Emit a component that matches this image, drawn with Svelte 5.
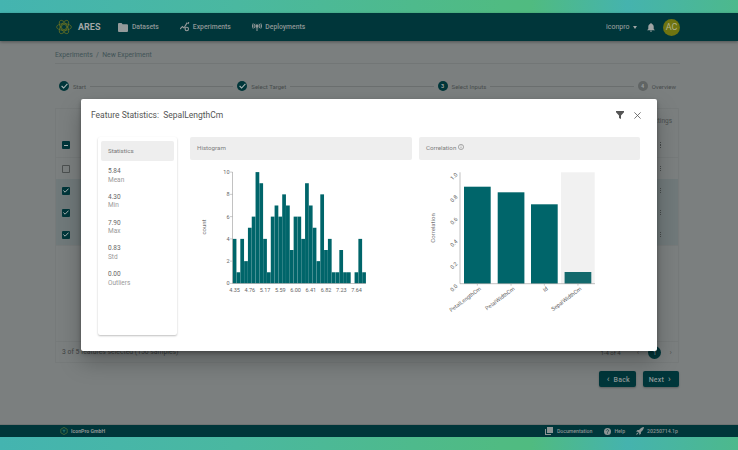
<script>
  const hist = [4,1,4,2,5,6,10,9,4,1,6,7,6,8,7,3,6,6,4,9,7,5,2,8,3,4,1,1,3,1,1,0,1,4,1];
  const hx0 = 232.7, hy0 = 283.4, hw = 133.3 / 35, hu = 11.13;
  const hTicks = [0,2,4,6,8,10];
  const hLabels = ['4.35','4.76','5.17','5.59','6.00','6.41','6.82','7.23','7.64'];
  const corr = [
    { name: 'PetalLengthCm', x: 464, w: 26.7, top: 186.7 },
    { name: 'PetalWidthCm', x: 497.7, w: 26.7, top: 192.3 },
    { name: 'Id', x: 531, w: 26.7, top: 204.3 },
    { name: 'SepalWidthCm', x: 564.6, w: 26.7, top: 272, dim: true }
  ];
  const cTicks = ['0.0','0.2','0.4','0.6','0.8','1.0'];
  const stats = [
    ['5.84','Mean'],['4.30','Min'],['7.90','Max'],['0.83','Std'],['0.00','Outliers']
  ];
  const rows = [0,1,2,3,4];
  const steps = [
    { label: 'Start', done: true },
    { label: 'Select Target', done: true },
    { label: 'Select Inputs', n: 3, active: true },
    { label: 'Overview', n: 4 }
  ];
</script>

<div class="page">
  <div class="shell">
    <header class="top">
      <svg class="logo" viewBox="0 0 16 16" fill="none" stroke="#6d7420" stroke-width=".7">
        <ellipse cx="8" cy="8" rx="7.4" ry="3.4"/>
        <ellipse cx="8" cy="8" rx="7.4" ry="3.4" transform="rotate(60 8 8)"/>
        <ellipse cx="8" cy="8" rx="7.4" ry="3.4" transform="rotate(120 8 8)"/>
        <circle cx="8" cy="8" r="2.6"/>
      </svg>
      <span class="brand">ARES</span>
      <nav class="nav">
        <span class="nav-item">
          <svg width="10" height="9" viewBox="0 0 10 9" fill="#949a9a"><path d="M0 1a1 1 0 0 1 1-1h2.6l1 1.2H9a1 1 0 0 1 1 1V8a1 1 0 0 1-1 1H1a1 1 0 0 1-1-1z"/></svg>
          Datasets
        </span>
        <span class="nav-item exp">
          <svg width="10" height="10" viewBox="0 0 10 10" fill="none" stroke="#949a9a" stroke-width="1.1"><path d="M0 7l2.4-2.4L4 6l3.2-5.4M8.8 0L8 2"/><circle cx="6.8" cy="7" r="1.7"/></svg>
          Experiments
        </span>
        <span class="nav-item">
          <svg width="10" height="8" viewBox="0 0 10 8" fill="none" stroke="#949a9a" stroke-width="1"><circle cx="5" cy="3" r="1.2" fill="#949a9a"/><path d="M5 3v5M3 .8a3.2 3.2 0 0 0 0 4.400M7 .8a3.2 3.2 0 0 1 0 4.400M1.200.4a5 5 0 0 0 0 5.200M8.800.4a5 5 0 0 1 0 5.200"/></svg>
          Deployments
        </span>
      </nav>
      <span class="spacer"></span>
      <span class="user">iconpro</span>
      <span class="caret"></span>
      <svg class="bell" width="8" height="9" viewBox="0 0 8 9" fill="#a0a5a5"><path d="M4 0a.7.7 0 0 1 .7.7v.4C6 1.4 6.7 2.5 6.7 3.800V6L8 7.200H0L1.300 6V3.800C1.300 2.500 2 1.400 3.300 1.100V.7A.7.7 0 0 1 4 0zM3 7.800h2A1 1 0 0 1 3 7.800z"/></svg>
      <span class="avatar">AC</span>
    </header>

    <main class="main">
      <div class="crumbs">Experiments&nbsp; /&nbsp; New Experiment</div>
      <div class="stepper">
        {#each steps as s, i}
          {#if i > 0}<span class="step-line"></span>{/if}
          <span class="step">
            <span class="dot" class:on={s.done || s.active}>
              {#if s.done}
                <svg width="7" height="6" viewBox="0 0 7 6" fill="none" stroke="#a8b4b4" stroke-width="1.1"><path d="M.6 3l2 2L6.4.8"/></svg>
              {:else}
                {s.n}
              {/if}
            </span>
            {s.label}
          </span>
        {/each}
      </div>

      <section class="table">
        <div class="table-head"><span class="settings">Settings</span></div>
        {#each rows as r}
          <div class="row" class:sel={r > 1} class:first={r === 0}>
            <span class="box" class:empty={r === 1}>
              {#if r === 0}<i class="dash"></i>{:else if r > 1}
                <svg width="6" height="5" viewBox="0 0 6 5" fill="none" stroke="#a8b4b4" stroke-width="1"><path d="M.4 2.5l1.7 1.700L5.600.6"/></svg>
              {/if}
            </span>
            <span class="kebab"><i></i><i></i><i></i></span>
          </div>
        {/each}
        <div class="row-end"></div>
        <span class="spacer"></span>
        <div class="table-foot">
          <span>3 of 5 features selected (150 samples)</span>
          <span class="spacer"></span>
          <span class="range">1-4 of 4</span>
          <span class="pg-chev">‹</span>
          <span class="pg-cur">1</span>
          <span class="pg-chev last">›</span>
        </div>
      </section>

      <div class="actions">
        <button class="btn"><span class="chev">‹</span> Back</button>
        <button class="btn">Next <span class="chev">›</span></button>
      </div>

      <div class="modal">
        <div class="modal-head">
          <span class="title">Feature Statistics:&nbsp; SepalLengthCm</span>
          <span class="spacer"></span>
          <svg width="8" height="8" viewBox="0 0 8 8" fill="#555"><path d="M0 0h8v1.200L5 4.400V8L3 7V4.400L0 1.200z"/></svg>
          <svg class="close" width="7" height="7" viewBox="0 0 7 7" fill="none" stroke="#555" stroke-width=".8"><path d="M.4.4l6.200 6.200M6.600.4L.4 6.600"/></svg>
        </div>
        <div class="modal-body">
          <aside class="stats">
            <div class="chip">Statistics</div>
            {#each stats as [v, l]}
              <div class="stat"><b>{v}</b><span>{l}</span></div>
            {/each}
          </aside>

          <div class="panel hist">
            <div class="panel-head">Histogram</div>
            <svg class="chart" viewBox="190 160 222 170" width="222" height="170">
              <text class="axis-title" transform="translate(206 227) rotate(-90)" text-anchor="middle">count</text>
              {#each hist as v, i}
                <rect x={hx0 + i * hw} y={hy0 - v * hu} width={hw - 0.08} height={v * hu} fill="#00656a"/>
              {/each}
              <path d="M232.5 172V283.5H366" fill="none" stroke="#999" stroke-width=".6"/>
              {#each hTicks as t}
                <path d="M230 {hy0 - t * hu}H232.5" stroke="#999" stroke-width=".5"/>
                <text class="tick" x="229.5" y={hy0 - t * hu + 2} text-anchor="end">{t}</text>
              {/each}
              {#each hLabels as l, i}
                <text class="tick" x={234.6 + i * 15.24} y="291.5" text-anchor="middle">{l}</text>
              {/each}
            </svg>
          </div>

          <div class="panel corr">
            <div class="panel-head">Correlation
              <svg width="6" height="6" viewBox="0 0 6 6" fill="none" stroke="#666" stroke-width=".5"><circle cx="3" cy="3" r="2.6"/><path d="M3 2.600v1.800M3 1.400v.6"/></svg>
            </div>
            <svg class="chart" viewBox="419 160 221 170" width="221" height="170">
              <text class="axis-title" transform="translate(435 228) rotate(-90)" text-anchor="middle">Correlation</text>
              <rect x="561" y="172.3" width="33.7" height="111.5" fill="#f1f1f1"/>
              {#each corr as b}
                <rect x={b.x} y={b.top} width={b.w} height={283.7 - b.top} fill={b.dim ? '#13696c' : '#00656a'}/>
              {/each}
              <path d="M460 172.3V283.7H595" fill="none" stroke="#999" stroke-width=".6"/>
              {#each cTicks as t, i}
                <text class="tick" transform="translate(458 {286.5 - i * 22.3}) rotate(-45)" text-anchor="end">{t}</text>
              {/each}
              {#each corr as b}
                <path d="M{b.x + b.w / 2} 283.7v2" stroke="#999" stroke-width=".5"/>
                <text class="tick" transform="translate({b.x + b.w / 2 + 4} 289.5) rotate(-37)" text-anchor="end">{b.name}</text>
              {/each}
            </svg>
          </div>
        </div>
      </div>
    </main>

    <footer class="foot">
      <svg class="flogo" viewBox="0 0 10 10" fill="none" stroke="#5d7a3a" stroke-width=".8"><path d="M5 .5L9 2.8V7.2L5 9.5 1 7.200V2.800z"/><path d="M5 3v4M3.200 4l1.800 1 1.800-1" stroke="#2f8a7e"/></svg>
      <span class="company">IconPro GmbH</span>
      <span class="spacer"></span>
      <span class="f-item">
        <svg width="8" height="8" viewBox="0 0 8 8" fill="#8d9494"><path d="M2 0h6v6H2zM0 2h1v5h5v1H0z"/></svg>
        Documentation
      </span>
      <span class="f-item help">
        <svg width="7" height="7" viewBox="0 0 7 7"><circle cx="3.5" cy="3.5" r="3.5" fill="#8d9494"/><path d="M2.400 2.700a1.100 1.100 0 1 1 1.700.9c-.5.3-.6.5-.6.9M3.500 5.100v.6" fill="none" stroke="#00353a" stroke-width=".7"/></svg>
        Help
      </span>
      <span class="f-item rocket">
        <svg width="8" height="8" viewBox="0 0 8 8" fill="#8d9494"><path d="M8 0C5.800.2 4.200 1.300 3 3.100L1.500 3 0 4.500l1.800.3L3.200 6.200l.3 1.800L5 6.500 4.900 5C6.700 3.800 7.800 2.200 8 0zM1.200 5.600L0 8l2.400-1.200z"/></svg>
        20250714.1p
      </span>
    </footer>
  </div>
</div>

<style>
  :global(body) {
    margin: 0;
    font-family: Roboto, "Liberation Sans", sans-serif;
  }
  .page {
    height: 450px;
    box-sizing: border-box;
    padding: 13px 0;
    background: linear-gradient(90deg, #44b4b0 0%, #4ab8a0 32%, #50bb82 68%, #50bb80 72%, #45b3ae 85%, #4db98c 100%);
  }
  .shell {
    height: 424px;
    display: flex;
    flex-direction: column;
    background: #7b7f7f;
  }
  .spacer { flex: 1; }

  .top {
    height: 28px;
    flex: none;
    display: flex;
    align-items: center;
    padding: 0 58px 0 56px;
    background: #00363a;
    box-shadow: 0 1px 3px rgba(0,0,0,.35);
    position: relative;
    z-index: 1;
  }
  .logo { width: 16px; height: 16px; }
  .brand { margin-left: 6px; font-size: 9px; font-weight: 700; color: #a2a6a6; }
  .nav { display: flex; margin-left: 18px; gap: 21px; }
  .nav-item { display: flex; align-items: center; gap: 3.5px; font-size: 6.8px; font-weight: 500; color: #8f9696; }
  .nav-item.exp { gap: 3px; }
  .user { font-size: 7px; color: #a0a5a5; }
  .caret { margin-left: 3px; border: 2.5px solid transparent; border-top: 3px solid #a0a5a5; border-bottom: 0; }
  .bell { margin-left: 10px; }
  .avatar {
    margin-left: 8.5px;
    width: 17px; height: 17px;
    border-radius: 50%;
    background: #6f7410;
    color: #aeb08c;
    font-size: 9px;
    display: flex; align-items: center; justify-content: center;
  }

  .main {
    flex: 1;
    position: relative;
    display: flex;
    flex-direction: column;
    padding: 0 58px 0 55px;
    min-height: 0;
  }
  .crumbs {
    height: 23px;
    flex: none;
    box-sizing: border-box;
    padding-top: 10px;
    line-height: 9px;
    font-size: 6.8px;
    color: #3f5356;
    border-bottom: 1px solid #727676;
  }
  .stepper {
    display: flex;
    align-items: center;
    height: 12px;
    margin-top: 16px;
    padding: 0 4px;
  }
  .step { display: flex; align-items: center; gap: 4px; font-size: 6px; color: #474c4c; }
  .step-line { flex: 1; height: 1px; background: #6a6e6e; margin: 0 4px; }
  .dot {
    width: 10px; height: 10px;
    border-radius: 50%;
    background: #606464;
    color: #9a9e9e;
    font-size: 5.5px;
    font-weight: 700;
    display: flex; align-items: center; justify-content: center;
  }
  .dot.on { background: #00363a; }

  .table {
    margin-top: 16px;
    height: 255px;
    flex: none;
    margin-right: 1px;
    display: flex;
    flex-direction: column;
    border: 1px solid #767a7a;
    box-sizing: border-box;
  }
  .table-head {
    height: 24px;
    flex: none;
    display: flex;
    justify-content: flex-end;
    padding: 8px 6px 0 0;
    box-sizing: border-box;
  }
  .settings { font-size: 6.5px; color: #4a4e4e; }
  .row {
    height: 22px;
    flex: none;
    display: flex;
    align-items: center;
    justify-content: space-between;
    padding: 0 17px 0 6px;
    border-top: 1px solid #767a7a;
    box-sizing: border-box;
  }
  .row.first { height: 24px; border-top: 0; }
  .row.sel { background: #70797a; border-top-color: #70797a; }
  .row-end { height: 0; border-top: 1px solid #767a7a; }
  .box {
    width: 8px; height: 8px;
    background: #00363a;
    border-radius: 1px;
    display: flex; align-items: center; justify-content: center;
  }
  .box.empty { background: none; box-shadow: inset 0 0 0 1px #4c5050; }
  .dash { width: 4px; height: 1px; background: #a8b4b4; display: block; }
  .kebab { display: flex; flex-direction: column; gap: 1px; }
  .kebab i { width: 1.3px; height: 1.3px; background: #474c4c; display: block; }
  .table-foot {
    height: 21px;
    flex: none;
    display: flex;
    align-items: center;
    padding: 0 6px;
    font-size: 6.8px;
    color: #3f4343;
    border-top: 1px solid #767a7a;
    box-sizing: border-box;
  }
  .range { font-size: 6px; }
  .pg-chev { margin-left: 16px; color: #555; font-size: 8px; }
  .pg-chev.last { margin-left: 8.5px; }
  .pg-cur {
    margin-left: 9px;
    width: 13px; height: 13px;
    border-radius: 50%;
    background: #00363a;
    color: #9aa;
    font-size: 6px;
    display: flex; align-items: center; justify-content: center;
  }
  .actions {
    display: flex;
    justify-content: flex-end;
    gap: 7px;
    margin-top: 8px;
    margin-right: 1px;
  }
  .btn {
    height: 16px;
    width: 36.5px;
    padding: 0;
    border: 0;
    border-radius: 2px;
    background: #00363a;
    color: #8d9696;
    font: 500 7px Roboto, sans-serif;
    letter-spacing: .2px;
    box-shadow: 0 1px 2px rgba(0,0,0,.25);
  }
  .chev { font-size: 9px; margin: 0 2px; }

  .modal {
    position: absolute;
    left: 81px;
    top: 58px;
    width: 576px;
    height: 252px;
    background: #fff;
    border-radius: 2px;
    box-shadow: 0 11px 22px rgba(0,0,0,.26), 0 2px 4px rgba(0,0,0,.3);
    display: flex;
    flex-direction: column;
    padding: 0 17px;
    box-sizing: border-box;
  }
  .modal-head {
    height: 38px;
    flex: none;
    display: flex;
    align-items: center;
    padding: 0 0 6px 0;
    margin-left: -7px;
    margin-right: -1px;
    box-sizing: border-box;
  }
  .title { font-size: 8.5px; color: #555; }
  .close { margin-left: 10px; }
  .modal-body { display: flex; align-items: flex-start; }
  .stats {
    width: 79px;
    height: 198px;
    flex: none;
    padding: 4px 3px;
    box-sizing: border-box;
    border-radius: 2px;
    box-shadow: 0 1px 2px rgba(0,0,0,.25);
  }
  .chip {
    height: 20px;
    line-height: 20px;
    padding-left: 7px;
    background: #eee;
    border-radius: 2px;
    font-size: 6.2px;
    color: #777;
    margin-bottom: 6px;
  }
  .stat {
    height: 25.8px;
    padding-left: 7px;
    display: flex;
    flex-direction: column;
    font-size: 6.5px;
    line-height: 8.5px;
    color: #999;
  }
  .stat b { font-weight: 400; color: #666; }
  .panel { height: 193px; }
  .hist { width: 222px; margin-left: 13px; }
  .corr { width: 221px; margin-left: 7px; }
  .panel-head {
    height: 23px;
    line-height: 23px;
    padding-left: 7px;
    background: #eee;
    border-radius: 2px;
    font-size: 6.2px;
    color: #808080;
  }
  .panel-head svg { vertical-align: 0; margin-left: 0; }
  .chart { display: block; }
  .tick { font-size: 5.5px; fill: #666; font-family: Roboto, sans-serif; }
  .axis-title { font-size: 6px; fill: #777; font-family: Roboto, sans-serif; }

  .foot {
    height: 13px;
    flex: none;
    display: flex;
    align-items: center;
    padding: 0 60px 0 60px;
    background: #00363a;
    border-top: 1px solid #6f7373;
    box-sizing: border-box;
    font-size: 5.2px;
    font-weight: 500;
    color: #8d9494;
  }
  .flogo { width: 8px; height: 8px; }
  .company { margin-left: 3px; font-weight: 700; }
  .f-item { display: flex; align-items: center; gap: 4px; margin-left: 12px; }
  .f-item.help { gap: 3px; }
  .f-item.rocket { gap: 3px; margin-left: 11px; }
</style>
